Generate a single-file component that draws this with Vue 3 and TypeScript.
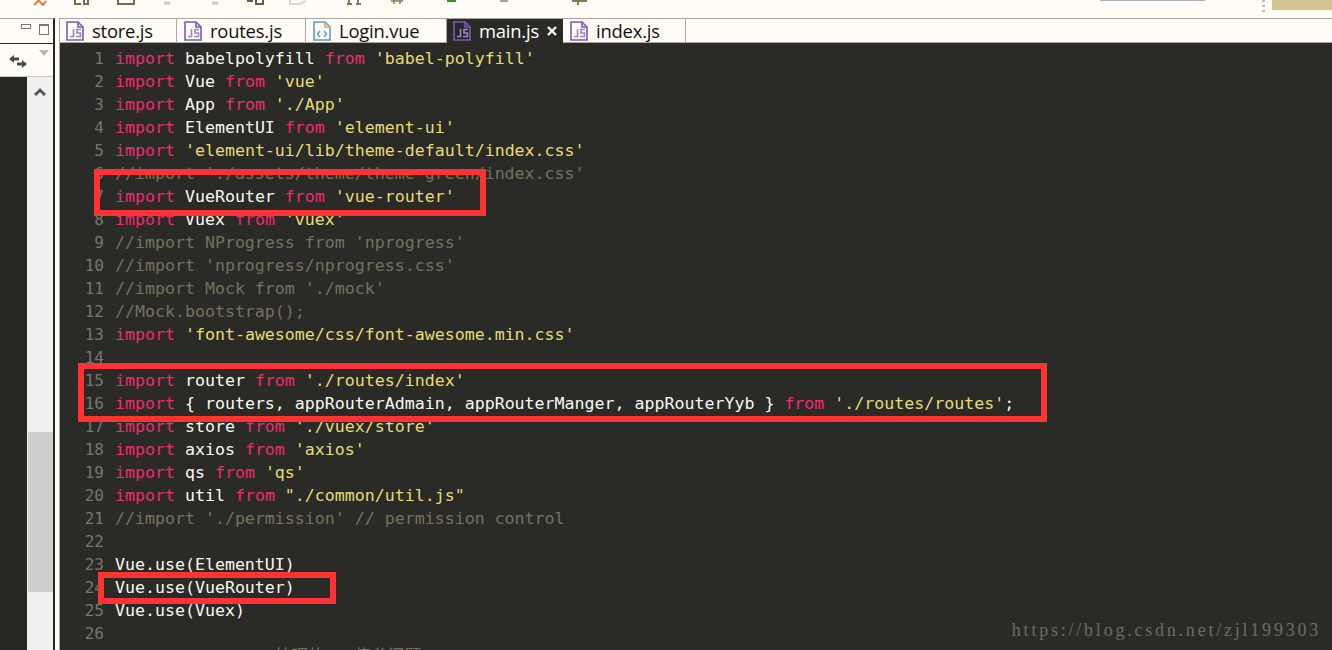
<script setup lang="ts">
type Tok = { t: string; c: string }
const k = 'kw', p = 'pl', s = 'st', m = 'cm'
const lines: Tok[][] = [
  [{ t: 'import', c: k }, { t: ' babelpolyfill ', c: p }, { t: 'from', c: k }, { t: " 'babel-polyfill'", c: s }],
  [{ t: 'import', c: k }, { t: ' Vue ', c: p }, { t: 'from', c: k }, { t: " 'vue'", c: s }],
  [{ t: 'import', c: k }, { t: ' App ', c: p }, { t: 'from', c: k }, { t: " './App'", c: s }],
  [{ t: 'import', c: k }, { t: ' ElementUI ', c: p }, { t: 'from', c: k }, { t: " 'element-ui'", c: s }],
  [{ t: 'import', c: k }, { t: " 'element-ui/lib/theme-default/index.css'", c: s }],
  [{ t: "//import './assets/theme/theme-green/index.css'", c: m }],
  [{ t: 'import', c: k }, { t: ' VueRouter ', c: p }, { t: 'from', c: k }, { t: " 'vue-router'", c: s }],
  [{ t: 'import', c: k }, { t: ' Vuex ', c: p }, { t: 'from', c: k }, { t: " 'vuex'", c: s }],
  [{ t: "//import NProgress from 'nprogress'", c: m }],
  [{ t: "//import 'nprogress/nprogress.css'", c: m }],
  [{ t: "//import Mock from './mock'", c: m }],
  [{ t: '//Mock.bootstrap();', c: m }],
  [{ t: 'import', c: k }, { t: " 'font-awesome/css/font-awesome.min.css'", c: s }],
  [],
  [{ t: 'import', c: k }, { t: ' router ', c: p }, { t: 'from', c: k }, { t: " './routes/index'", c: s }],
  [{ t: 'import', c: k }, { t: ' { routers, appRouterAdmain, appRouterManger, appRouterYyb } ', c: p }, { t: 'from', c: k }, { t: " './routes/routes'", c: s }, { t: ';', c: p }],
  [{ t: 'import', c: k }, { t: ' store ', c: p }, { t: 'from', c: k }, { t: " './vuex/store'", c: s }],
  [{ t: 'import', c: k }, { t: ' axios ', c: p }, { t: 'from', c: k }, { t: " 'axios'", c: s }],
  [{ t: 'import', c: k }, { t: ' qs ', c: p }, { t: 'from', c: k }, { t: " 'qs'", c: s }],
  [{ t: 'import', c: k }, { t: ' util ', c: p }, { t: 'from', c: k }, { t: ' "./common/util.js"', c: s }],
  [{ t: "//import './permission' // permission control", c: m }],
  [],
  [{ t: 'Vue.use(ElementUI)', c: p }],
  [{ t: 'Vue.use(VueRouter)', c: p }],
  [{ t: 'Vue.use(Vuex)', c: p }],
  [],
  [{ t: '// axios.prop() 处理的   传参问题', c: m }],
]
const tabs = [
  { name: 'store.js', kind: 'js', w: 117 },
  { name: 'routes.js', kind: 'js', w: 129 },
  { name: 'Login.vue', kind: 'vue', w: 141 },
  { name: 'main.js', kind: 'js', w: 116, active: true },
  { name: 'index.js', kind: 'js', w: 123 },
]
const boxes = [
  { l: 94, t: 169, w: 392, h: 47 },
  { l: 78, t: 363, w: 969, h: 59 },
  { l: 98, t: 572, w: 238, h: 32 },
]
</script>

<template>
  <div class="screen">
    <div class="toolbar">
      <svg class="tools" width="760" height="6" viewBox="0 0 760 6" fill="none" stroke-width="2">
        <path d="M34 5l4-4 1 0 4 4 3-4" stroke="#e8793a" />
        <path d="M75 0v4h6M84 0v4h4V0" stroke="#7a6a48" />
        <path d="M118 0v4h16V0" stroke="#7a6a48" />
        <path d="M164 3h6" stroke="#cfccc0" stroke-width="3" />
        <path d="M212 3h6" stroke="#cfccc0" stroke-width="3" />
        <path d="M247 1h6M256 0v4h7V0" stroke="#6b5c40" />
        <path d="M290 0v4h10l6-3" stroke="#d9d6cc" />
        <path d="M347 4h5M356 4h5M349 0v4M358 0v4" stroke="#8a7a58" />
        <path d="M391 1h12M394 0v4M400 0v4" stroke="#8a7a58" stroke-width="1.500" />
        <path d="M447 1h9" stroke="#3f8a3f" />
        <path d="M500 1h8" stroke="#a5a299" />
        <path d="M572 1h15M578 0v5" stroke="#8a7a50" />
      </svg>
      <div class="rule"></div>
      <div class="dots"></div>
      <div class="perspective"></div>
    </div>

    <div class="workbench">
      <aside class="side">
        <div class="side-head">
          <span class="min"></span>
          <span class="max"></span>
        </div>
        <div class="side-tool">
          <svg width="18" height="13" viewBox="0 0 18 13">
            <path d="M0 4l5-4v2.500h5v3H5V8zM18 9l-5-4v2.500H8v3h5V13z" fill="#4a4a4a" />
          </svg>
          <span class="menu-tri"></span>
        </div>
        <div class="side-body">
          <div class="outline"></div>
          <div class="scroll">
            <svg class="up" width="12" height="9" viewBox="0 0 12 9" fill="none">
              <path d="M1 8l5-5 5 5" stroke="#555" stroke-width="3" />
            </svg>
            <div class="thumb"></div>
          </div>
        </div>
      </aside>

      <main class="editor">
        <div class="tabs">
          <div v-for="tab in tabs" :key="tab.name" class="tab" :class="{ active: tab.active }" :style="{ width: tab.w + 'px' }">
            <svg v-if="tab.kind === 'js'" class="file" width="18" height="20" viewBox="0 0 18 20" fill="none">
              <path d="M1 1h11l5 5v13H1z" stroke="#7e57b8" stroke-width="1.600" />
              <path d="M12 1v5h5" stroke="#7e57b8" stroke-width="1.600" />
              <path d="M7.500 8v7.500H4M15 8.500h-4v3.500h3.500v3.500H10" stroke="#9b86c4" stroke-width="1.600" />
            </svg>
            <svg v-else class="file" width="18" height="20" viewBox="0 0 18 20" fill="none">
              <path d="M1 1h11l5 5v13H1z" stroke="#5d9bc9" stroke-width="1.600" />
              <path d="M12 1v5h5" stroke="#e8a35c" stroke-width="1.600" />
              <path d="M7 10l-2.500 3L7 16M11 10l2.500 3L11 16" stroke="#5d9bc9" stroke-width="1.400" />
            </svg>
            <span class="tab-name">{{ tab.name }}</span>
            <svg v-if="tab.active" class="close" width="10" height="10" viewBox="0 0 10 10">
              <path d="M1 1l8 8M9 1l-8 8" stroke="#fff" stroke-width="2.400" />
            </svg>
          </div>
          <div class="tab-fill"></div>
        </div>
        <div class="code">
          <div v-for="(line, i) in lines" :key="i" class="line">
            <span class="num">{{ i + 1 }}</span>
            <span class="src"><span v-for="(tok, j) in line" :key="j" :class="tok.c">{{ tok.t }}</span></span>
          </div>
          <div v-for="(b, i) in boxes" :key="'b' + i" class="mark" :style="{ left: b.l - 60 + 'px', top: b.t - 43 + 'px', width: b.w + 'px', height: b.h + 'px' }"></div>
          <div class="water">https://blog.csdn.net/zjl199303</div>
        </div>
      </main>
    </div>
  </div>
</template>

<style>
html, body { margin: 0; background: #2a2b26; overflow: hidden; }
</style>

<style scoped>
.screen { width: 1332px; height: 650px; display: flex; flex-direction: column; overflow: hidden; background: #fffcf5; }
.toolbar { height: 18px; position: relative; background: #fffcf5; flex: none; }
.tools { display: block; }
.rule { position: absolute; left: 1100px; top: 0; width: 105px; height: 1px; background: #adadb5; }
.dots { position: absolute; left: 1262px; top: 0; width: 3px; height: 14px; background: repeating-linear-gradient(#bdbdbd 0 2px, transparent 2px 5px); }
.perspective { position: absolute; right: 0; top: 0; width: 60px; height: 10px; background: #d4c294; }
.workbench { flex: 1; display: flex; min-height: 0; }
.side { width: 53px; flex: none; display: flex; flex-direction: column; border-top: 1px solid #a8a8a8; border-right: 2px solid #262623; }
.side-head { height: 24px; position: relative; flex: none; background: #fffcf5; border-bottom: 1px solid #262623; }
.min { position: absolute; left: 21px; top: 5px; width: 8px; height: 3px; border: 1px solid #777; }
.max { position: absolute; left: 39px; top: 5px; width: 8px; height: 8px; border: 1px solid #777; border-top-width: 2px; }
.side-tool { height: 33px; flex: none; position: relative; background: #fffcf5; border-bottom: 1px solid #c8c8c8; box-sizing: border-box; }
.side-tool svg { position: absolute; left: 9px; top: 11px; }
.menu-tri { position: absolute; left: 39px; top: 6px; width: 0; height: 0; border-left: 5px solid transparent; border-right: 5px solid transparent; border-top: 6px solid #b5b5b5; }
.side-body { flex: 1; display: flex; min-height: 0; }
.outline { width: 27px; flex: none; background: #262623; }
.scroll { flex: 1; background: #f0f0f0; position: relative; }
.up { position: absolute; left: 7px; top: 10px; }
.thumb { position: absolute; left: 1px; right: 0; top: 355px; height: 160px; background: #cdcdcd; }
.editor { flex: 1; min-width: 0; display: flex; flex-direction: column; margin-left: 4px; border-left: 1px solid #a8a8a8; }
.tabs { height: 25px; flex: none; display: flex; box-sizing: border-box; border-top: 1px solid #a8a8a8; background: #fffcf5; }
.tab { display: flex; align-items: center; box-sizing: border-box; padding-left: 7px; border-right: 1px solid #a8a8a8; border-bottom: 1px solid #a8a8a8; }
.tab:first-child { padding-left: 6px; }
.tab.active { background: #2a2b26; border-color: #2a2b26; padding-left: 6px; }
.tab-fill { flex: 1; border-bottom: 1px solid #a8a8a8; }
.file { flex: none; }
.tab-name { font: 18.4px/24px "Open Sans", "Liberation Sans", sans-serif; margin-left: 8px; white-space: nowrap; letter-spacing: -0.2px; color: #111; }
.active .tab-name { color: #fff; }
.close { margin-left: 8px; flex: none; }
.code { flex: 1; min-height: 0; background: #2a2b26; position: relative; overflow: hidden; padding-top: 4px; font-family: "DejaVu Sans Mono", "Noto Sans CJK SC", monospace; font-size: 16.6px; }
.line { display: flex; height: 23px; line-height: 23px; white-space: pre; }
.num { width: 44px; flex: none; text-align: right; color: #757670; font-size: 16px; }
.src { margin-left: 11px; }
.kw { color: #f02a72; }
.pl { color: #f8f8f2; }
.st { color: #e6db74; }
.cm { color: #75715e; }
.mark { position: absolute; box-sizing: border-box; border: 6px solid #ff3333; }
.water { position: absolute; right: 11px; top: 575px; font: 18px/24px "Liberation Serif", serif; color: #6a6b65; letter-spacing: 2.78px; white-space: nowrap; }
</style>
